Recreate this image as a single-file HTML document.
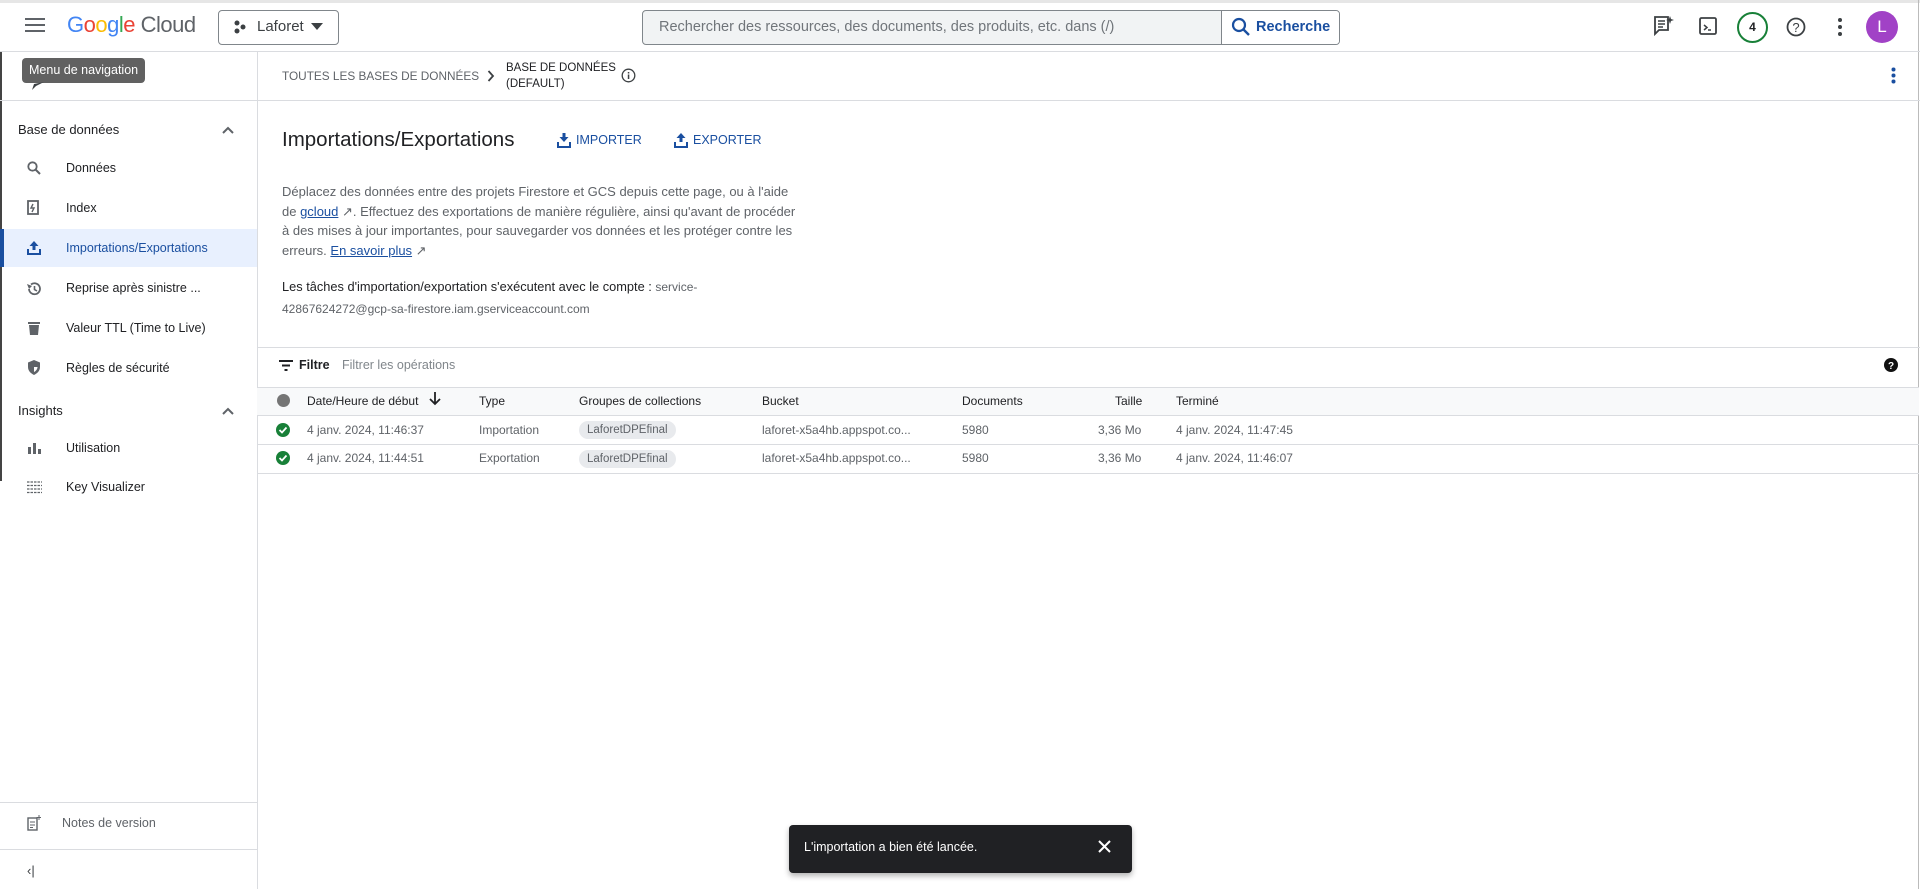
<!DOCTYPE html>
<html><head><meta charset="utf-8"><style>
*{box-sizing:border-box;margin:0;padding:0}
body{width:1920px;height:889px;overflow:hidden;background:#fff;font-family:"Liberation Sans",Arial,sans-serif;color:#202124;position:relative}
.a{position:absolute;white-space:nowrap}
.hl{position:absolute;background:#dadce0;height:1px}
.vl{position:absolute;background:#dadce0;width:1px}
.nav{font-size:12.5px;color:#202124}
.ic{position:absolute}
.t{font-size:12px;color:#5f6368}
.th{font-size:12px;color:#202124}
.chip{position:absolute;background:#e8eaed;border-radius:10px;font-size:11.5px;color:#5f6368;padding:3px 8px}
a{color:#1a4fa0;text-decoration:underline}
</style></head><body>
<div class="hl" style="left:0;top:0;width:1920px;background:#e6e6e6;height:3px"></div>
<div class="vl" style="left:1918px;top:0;height:889px;background:#bbb"></div>
<div class="vl" style="left:0;top:51px;height:430px;background:#444;width:2px"></div>
<!-- top bar -->
<svg class="ic" style="left:25px;top:17px" width="20" height="16"><rect y="1" width="20" height="2" fill="#5f6368"/><rect y="7" width="20" height="2" fill="#5f6368"/><rect y="13" width="20" height="2" fill="#5f6368"/></svg>
<div class="a" style="left:67px;top:12px;font-size:22px;letter-spacing:-0.5px"><span style="color:#4285f4">G</span><span style="color:#ea4335">o</span><span style="color:#fbbc04">o</span><span style="color:#4285f4">g</span><span style="color:#34a853">l</span><span style="color:#ea4335">e</span> <span style="color:#5f6368">Cloud</span></div>
<div class="a" style="left:218px;top:10px;width:121px;height:35px;border:1px solid #80868b;border-radius:4px"></div>
<svg class="ic" style="left:234px;top:19px" width="12" height="16"><circle cx="3" cy="4" r="2.5" fill="#3c4043"/><circle cx="9" cy="8" r="2.5" fill="#3c4043"/><circle cx="3" cy="12" r="2.5" fill="#3c4043"/></svg>
<div class="a" style="left:257px;top:18px;font-size:15px;color:#3c4043">Laforet</div>
<svg class="ic" style="left:311px;top:23px" width="12" height="7"><path d="M0 0L12 0L6 7Z" fill="#3c4043"/></svg>
<div class="a" style="left:642px;top:10px;width:698px;height:35px;border:1px solid #80868b;border-radius:4px;background:#f1f3f4"></div>
<div class="a" style="left:1221px;top:11px;width:118px;height:33px;background:#fff;border-left:1px solid #80868b;border-radius:0 3px 3px 0"></div>
<div class="a" style="left:659px;top:19px;font-size:14.5px;color:#70757a">Rechercher des ressources, des documents, des produits, etc. dans (/)</div>
<svg class="ic" style="left:1231px;top:17px" width="20" height="20"><circle cx="8" cy="8" r="6" stroke="#1a4fa0" stroke-width="2.2" fill="none"/><path d="M12.5 12.5L18 18" stroke="#1a4fa0" stroke-width="2.4"/></svg>
<div class="a" style="left:1256px;top:19px;font-size:14.5px;color:#1a4fa0;font-weight:bold">Recherche</div>
<svg class="ic" style="left:1654px;top:15px" width="20" height="22"><path d="M1 2H14V15H5L1 19Z" fill="none" stroke="#3c4043" stroke-width="1.8"/><path d="M4 6H11M4 9H11M4 12H9" stroke="#3c4043" stroke-width="1.5"/><path d="M16 1L17 4L20 5L17 6L16 9L15 6L12 5L15 4Z" fill="#3c4043"/></svg>
<svg class="ic" style="left:1699px;top:17px" width="18" height="18"><rect x="1" y="1" width="16" height="16" rx="1.5" fill="none" stroke="#3c4043" stroke-width="1.8"/><path d="M5 8L8 10.5L5 13M9 13H12" stroke="#3c4043" stroke-width="1.5" fill="none"/></svg>
<div class="a" style="left:1737px;top:12px;width:31px;height:31px;border:2px solid #188038;border-radius:50%;font-size:12px;font-weight:bold;text-align:center;line-height:27px">4</div>
<svg class="ic" style="left:1786px;top:17px" width="20" height="20"><circle cx="10" cy="10" r="8.5" fill="none" stroke="#3c4043" stroke-width="1.8"/><text x="10" y="15" font-size="13" text-anchor="middle" fill="#3c4043" font-family="Liberation Sans">?</text></svg>
<svg class="ic" style="left:1837px;top:17px" width="6" height="20"><circle cx="3" cy="3" r="2" fill="#3c4043"/><circle cx="3" cy="10" r="2" fill="#3c4043"/><circle cx="3" cy="17" r="2" fill="#3c4043"/></svg>
<div class="a" style="left:1866px;top:11px;width:32px;height:32px;border-radius:50%;background:#a142c6;color:#fff;font-size:17px;text-align:center;line-height:32px">L</div>
<div class="hl" style="left:0;top:51px;width:1920px"></div>
<!-- sidebar -->
<div class="vl" style="left:257px;top:51px;height:838px"></div>
<div class="a" style="left:22px;top:58px;height:25px;padding:0 7px;background:#616161;color:#fff;border-radius:4px;font-size:12.5px;line-height:25px">Menu de navigation</div>
<svg class="ic" style="left:32px;top:82px" width="12" height="8"><path d="M0 8L2 2L12 0L4 4Z" fill="#3c4043"/></svg>
<div class="hl" style="left:0;top:100px;width:257px"></div>
<div class="a nav" style="left:18px;top:122px;font-size:13px">Base de données</div>
<svg class="ic" style="left:222px;top:126px" width="12" height="8"><path d="M1 7L6 2L11 7" stroke="#5f6368" stroke-width="2" fill="none"/></svg>
<svg class="ic" style="left:27px;top:161px" width="14" height="14"><circle cx="5.5" cy="5.5" r="4.2" stroke="#5f6368" stroke-width="1.8" fill="none"/><path d="M8.5 8.5L13 13" stroke="#5f6368" stroke-width="2"/></svg>
<div class="a nav" style="left:66px;top:161px">Données</div>
<svg class="ic" style="left:27px;top:200px" width="14" height="16"><rect x="1" y="1" width="10" height="13" fill="none" stroke="#5f6368" stroke-width="1.8"/><path d="M6 4L4 8H7L5 12" stroke="#5f6368" stroke-width="1.4" fill="none"/></svg>
<div class="a nav" style="left:66px;top:201px">Index</div>
<div class="a" style="left:0;top:229px;width:257px;height:38px;background:#e8f0fe"></div>
<div class="a" style="left:0;top:229px;width:4px;height:38px;background:#1a4fa0"></div>
<svg class="ic" style="left:27px;top:240px" width="14" height="15"><path d="M7 1L2.5 6H5.5V10H8.5V6H11.5Z" fill="#1a4fa0"/><path d="M1 9V14H13V9" stroke="#1a4fa0" stroke-width="2" fill="none"/></svg>
<div class="a nav" style="left:66px;top:241px;color:#1a4fa0">Importations/Exportations</div>
<svg class="ic" style="left:26px;top:281px" width="16" height="16"><path d="M3 8A5.5 5.5 0 1 0 5 3.5" fill="none" stroke="#5f6368" stroke-width="1.8"/><path d="M1 3L3 8L6 5" fill="#5f6368"/><path d="M8.5 5V8.5L11 10" stroke="#5f6368" stroke-width="1.6" fill="none"/></svg>
<div class="a nav" style="left:66px;top:281px">Reprise après sinistre ...</div>
<svg class="ic" style="left:28px;top:321px" width="12" height="14"><rect x="0" y="1" width="12" height="2" fill="#5f6368"/><path d="M1 4H11L10 14H2Z" fill="#5f6368"/></svg>
<div class="a nav" style="left:66px;top:321px">Valeur TTL (Time to Live)</div>
<svg class="ic" style="left:27px;top:360px" width="14" height="15"><path d="M7 0L13 2.5V7C13 11 10 13.5 7 15C4 13.5 1 11 1 7V2.5Z" fill="#5f6368"/><path d="M7 3V12C9 11 10.5 9 10.5 7H7Z" fill="#fff"/></svg>
<div class="a nav" style="left:66px;top:361px">Règles de sécurité</div>
<div class="a nav" style="left:18px;top:403px;font-size:13px">Insights</div>
<svg class="ic" style="left:222px;top:407px" width="12" height="8"><path d="M1 7L6 2L11 7" stroke="#5f6368" stroke-width="2" fill="none"/></svg>
<svg class="ic" style="left:28px;top:442px" width="14" height="12"><rect x="0" y="5" width="3" height="7" fill="#5f6368"/><rect x="5" y="1" width="3" height="11" fill="#5f6368"/><rect x="10" y="7" width="3" height="5" fill="#5f6368"/></svg>
<div class="a nav" style="left:66px;top:441px">Utilisation</div>
<svg class="ic" style="left:27px;top:481px" width="15" height="13"><path d="M0 1H15M0 4.5H15M0 8H15M0 11.5H15" stroke="#5f6368" stroke-width="1.3" stroke-dasharray="2.5 1"/></svg>
<div class="a nav" style="left:66px;top:480px">Key Visualizer</div>
<div class="hl" style="left:0;top:802px;width:257px"></div>
<svg class="ic" style="left:27px;top:815px" width="14" height="16"><rect x="1" y="3" width="9" height="12" fill="none" stroke="#5f6368" stroke-width="1.4"/><path d="M3 7H8M3 10H8M3 12.5H6" stroke="#5f6368" stroke-width="1"/><path d="M12 0V5M9.5 2.5H14.5" stroke="#5f6368" stroke-width="1"/></svg>
<div class="a" style="left:62px;top:816px;font-size:12.5px;color:#5f6368">Notes de version</div>
<div class="hl" style="left:0;top:849px;width:257px"></div>
<div class="a" style="left:27px;top:863px;font-size:13px;color:#3c4043">‹|</div>
<!-- breadcrumb -->
<div class="a" style="left:282px;top:69px;font-size:11.8px;color:#5f6368">TOUTES LES BASES DE DONNÉES</div>
<svg class="ic" style="left:487px;top:70px" width="8" height="12"><path d="M1.5 1L6 6L1.5 11" stroke="#3c4043" stroke-width="1.8" fill="none"/></svg>
<div class="a" style="left:506px;top:60px;font-size:11.5px;color:#202124;line-height:16px">BASE DE DONNÉES<br>(DEFAULT)</div>
<svg class="ic" style="left:621px;top:68px" width="15" height="15"><circle cx="7.5" cy="7.5" r="6.3" fill="none" stroke="#3c4043" stroke-width="1.3"/><rect x="6.8" y="6.5" width="1.5" height="4.5" fill="#3c4043"/><rect x="6.8" y="4" width="1.5" height="1.5" fill="#3c4043"/></svg>
<svg class="ic" style="left:1891px;top:67px" width="5" height="17"><circle cx="2.5" cy="2.5" r="2" fill="#1a4fa0"/><circle cx="2.5" cy="8.5" r="2" fill="#1a4fa0"/><circle cx="2.5" cy="14.5" r="2" fill="#1a4fa0"/></svg>
<div class="hl" style="left:257px;top:100px;width:1663px"></div>
<!-- content -->
<div class="a" style="left:282px;top:128px;font-size:20.5px;color:#202124">Importations/Exportations</div>
<svg class="ic" style="left:557px;top:133px" width="14" height="15"><path d="M7 9L2.5 4H5.5V0H8.5V4H11.5Z" fill="#1a4fa0"/><path d="M1 9V14H13V9" stroke="#1a4fa0" stroke-width="2" fill="none"/></svg>
<div class="a" style="left:576px;top:133px;font-size:12.5px;color:#1a4fa0">IMPORTER</div>
<svg class="ic" style="left:674px;top:133px" width="14" height="15"><path d="M7 0L2.5 5H5.5V9H8.5V5H11.5Z" fill="#1a4fa0"/><path d="M1 9V14H13V9" stroke="#1a4fa0" stroke-width="2" fill="none"/></svg>
<div class="a" style="left:693px;top:133px;font-size:12.5px;color:#1a4fa0">EXPORTER</div>
<div class="a" style="left:282px;top:182px;font-size:13px;color:#5f6368;line-height:19.7px">Déplacez des données entre des projets Firestore et GCS depuis cette page, ou à l'aide<br>de <a>gcloud</a> ↗. Effectuez des exportations de manière régulière, ainsi qu'avant de procéder<br>à des mises à jour importantes, pour sauvegarder vos données et les protéger contre les<br>erreurs. <a>En savoir plus</a> ↗</div>
<div class="a" style="left:282px;top:276px;font-size:12.8px;color:#202124;line-height:21px">Les tâches d'importation/exportation s'exécutent avec le compte : <span style="color:#5f6368;font-size:12px">service-</span><br><span style="color:#5f6368;font-size:12px">42867624272@gcp-sa-firestore.iam.gserviceaccount.com</span></div>
<div class="hl" style="left:257px;top:347px;width:1663px"></div>
<svg class="ic" style="left:279px;top:360px" width="14" height="11"><path d="M0 1H14M3 5.5H11M5.5 10H8.5" stroke="#202124" stroke-width="2"/></svg>
<div class="a" style="left:299px;top:358px;font-size:12.5px;font-weight:bold;color:#202124">Filtre</div>
<div class="a" style="left:342px;top:358px;font-size:12.5px;color:#80868b">Filtrer les opérations</div>
<svg class="ic" style="left:1884px;top:358px" width="14" height="14"><circle cx="7" cy="7" r="7" fill="#111"/><text x="7" y="11" font-size="10" font-weight="bold" text-anchor="middle" fill="#fff" font-family="Liberation Sans">?</text></svg>
<div class="a" style="left:257px;top:387px;width:1662px;height:29px;background:#f8f9fa;border-top:1px solid #dadce0;border-bottom:1px solid #dadce0"></div>
<div class="a" style="left:277px;top:394px;width:13px;height:13px;border-radius:50%;background:#757575"></div>
<div class="a th" style="left:307px;top:394px">Date/Heure de début</div>
<svg class="ic" style="left:429px;top:392px" width="12" height="14"><path d="M6 0V12M1 7L6 12L11 7" stroke="#202124" stroke-width="1.8" fill="none"/></svg>
<div class="a th" style="left:479px;top:394px">Type</div>
<div class="a th" style="left:579px;top:394px">Groupes de collections</div>
<div class="a th" style="left:762px;top:394px">Bucket</div>
<div class="a th" style="left:962px;top:394px">Documents</div>
<div class="a th" style="left:1115px;top:394px">Taille</div>
<div class="a th" style="left:1176px;top:394px">Terminé</div>
<!-- row 1 -->
<svg class="ic" style="left:276px;top:423px" width="14" height="14"><circle cx="7" cy="7" r="7" fill="#188038"/><path d="M3.5 7L6 9.5L10.5 4.5" stroke="#fff" stroke-width="1.8" fill="none"/></svg>
<div class="a t" style="left:307px;top:423px">4 janv. 2024, 11:46:37</div>
<div class="a t" style="left:479px;top:423px">Importation</div>
<div class="chip" style="left:579px;top:421px">LaforetDPEfinal</div>
<div class="a t" style="left:762px;top:423px">laforet-x5a4hb.appspot.co...</div>
<div class="a t" style="left:962px;top:423px">5980</div>
<div class="a t" style="left:1098px;top:423px">3,36 Mo</div>
<div class="a t" style="left:1176px;top:423px">4 janv. 2024, 11:47:45</div>
<div class="hl" style="left:257px;top:444px;width:1662px"></div>
<!-- row 2 -->
<svg class="ic" style="left:276px;top:451px" width="14" height="14"><circle cx="7" cy="7" r="7" fill="#188038"/><path d="M3.5 7L6 9.5L10.5 4.5" stroke="#fff" stroke-width="1.8" fill="none"/></svg>
<div class="a t" style="left:307px;top:451px">4 janv. 2024, 11:44:51</div>
<div class="a t" style="left:479px;top:451px">Exportation</div>
<div class="chip" style="left:579px;top:450px">LaforetDPEfinal</div>
<div class="a t" style="left:762px;top:451px">laforet-x5a4hb.appspot.co...</div>
<div class="a t" style="left:962px;top:451px">5980</div>
<div class="a t" style="left:1098px;top:451px">3,36 Mo</div>
<div class="a t" style="left:1176px;top:451px">4 janv. 2024, 11:46:07</div>
<div class="hl" style="left:257px;top:473px;width:1662px"></div>
<!-- toast -->
<div class="a" style="left:789px;top:825px;width:343px;height:48px;background:#202124;border-radius:4px;box-shadow:0 3px 6px rgba(0,0,0,.3)"></div>
<div class="a" style="left:804px;top:840px;font-size:12.5px;color:#fff">L'importation a bien été lancée.</div>
<svg class="ic" style="left:1098px;top:840px" width="13" height="13"><path d="M1 1L12 12M12 1L1 12" stroke="#fff" stroke-width="2"/></svg>
</body></html>
